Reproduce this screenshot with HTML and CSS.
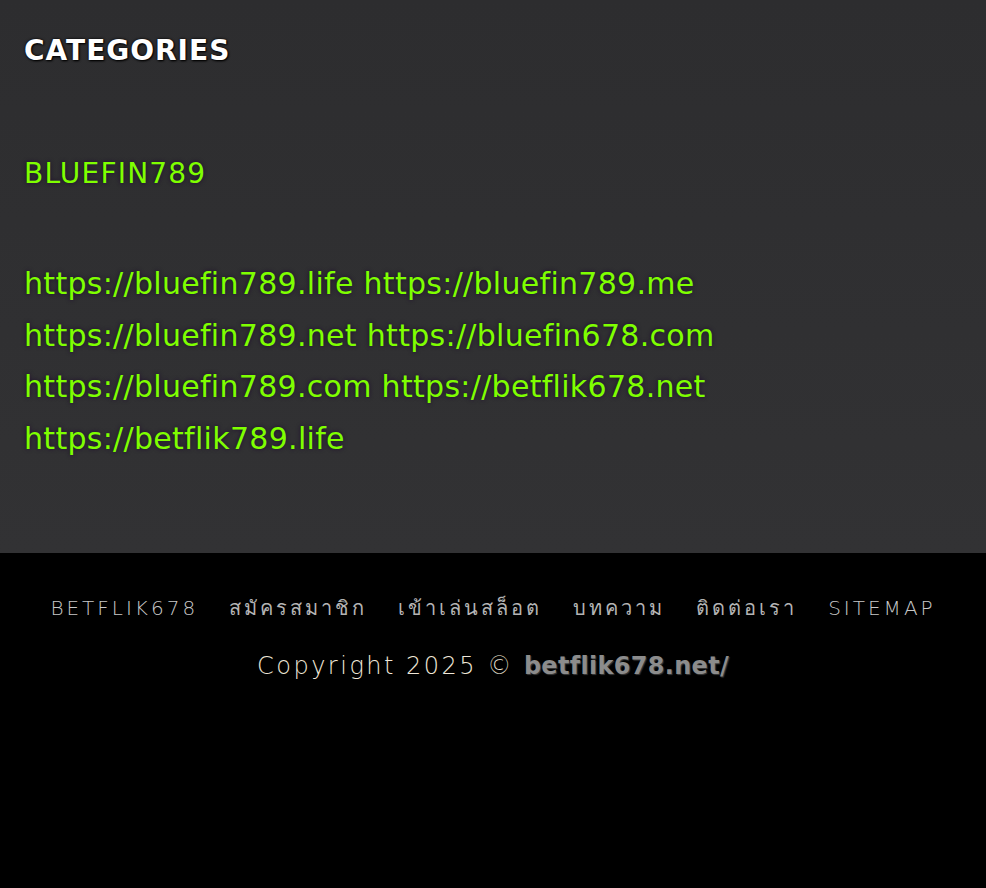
FILE: index.html
```html
<!DOCTYPE html>
<html lang="th">
<head>
    <meta charset="UTF-8">
    <meta name="viewport" content="width=device-width, initial-scale=1.0">
    <title>BETFLIK678</title>
    <link rel="stylesheet" href="styles.css">
</head>
<body>
    <section class="widget-area">
        <h2 class="widget-title">CATEGORIES</h2>
        <p class="cat-link">BLUEFIN789</p>
        <p class="site-links">
            <a href="#">https://bluefin789.life</a> <a href="#">https://bluefin789.me</a>
            <a href="#">https://bluefin789.net</a> <a href="#">https://bluefin678.com</a>
            <a href="#">https://bluefin789.com</a> <a href="#">https://betflik678.net</a>
            <a href="#">https://betflik789.life</a>
        </p>
    </section>

    <footer>
        <nav class="footer-menu">
            <a href="#">BETFLIK678</a>
            <a href="#" class="th">สมัครสมาชิก</a>
            <a href="#" class="th">เข้าเล่นสล็อต</a>
            <a href="#" class="th">บทความ</a>
            <a href="#" class="th">ติดต่อเรา</a>
            <a href="#">SITEMAP</a>
        </nav>
        <p class="copyright">Copyright 2025 © <a href="#">betflik678.net/</a></p>
    </footer>
</body>
</html>
```

FILE: styles.css
```css
* {
    margin: 0;
    padding: 0;
    box-sizing: border-box;
}

body {
    font-family: 'DejaVu Sans', 'Noto Sans', sans-serif;
    background: #000;
    min-height: 100vh;
}

a {
    color: inherit;
    text-decoration: none;
}

/* Categories widget */
.widget-area {
    background: linear-gradient(180deg, #2d2d2f 0%, #323234 100%);
    padding: 31px 24px 0;
    height: 553px;
}

.widget-title {
    font-size: 28px;
    font-weight: 700;
    color: #fff;
    letter-spacing: 1px;
    line-height: 40px;
    text-shadow: 0 0 3px #000, 1px 1px 2px #000;
}

.cat-link {
    margin-top: 83px;
    font-size: 28px;
    color: #7fff00;
    letter-spacing: 1.2px;
    line-height: 40px;
    text-shadow: 0 0 4px #1e0a2e;
}

.site-links {
    margin-top: 64px;
    max-width: 740px;
    font-size: 30px;
    color: #7fff00;
    letter-spacing: 0.3px;
    line-height: 51.5px;
    text-shadow: 0 0 4px #1e0a2e;
}

/* Footer */
footer {
    background: #000;
    padding: 41px 20px 0;
    text-align: center;
}

.footer-menu {
    display: flex;
    justify-content: center;
    gap: 31px;
    font-size: 20px;
    font-weight: 300;
    letter-spacing: 3px;
    line-height: 28px;
    color: #c8c8c8;
}

.footer-menu .th {
    letter-spacing: 3px;
    color: #b4b4b4;
}

.copyright {
    margin-top: 28px;
    font-size: 24px;
    font-weight: 300;
    line-height: 32px;
    letter-spacing: 2.5px;
    color: #efe7d8;
}

.copyright a {
    font-weight: 700;
    color: #8c8c8c;
    letter-spacing: 0.3px;
    text-shadow: 1px 1px 1px #3a3a3a;
}
```
